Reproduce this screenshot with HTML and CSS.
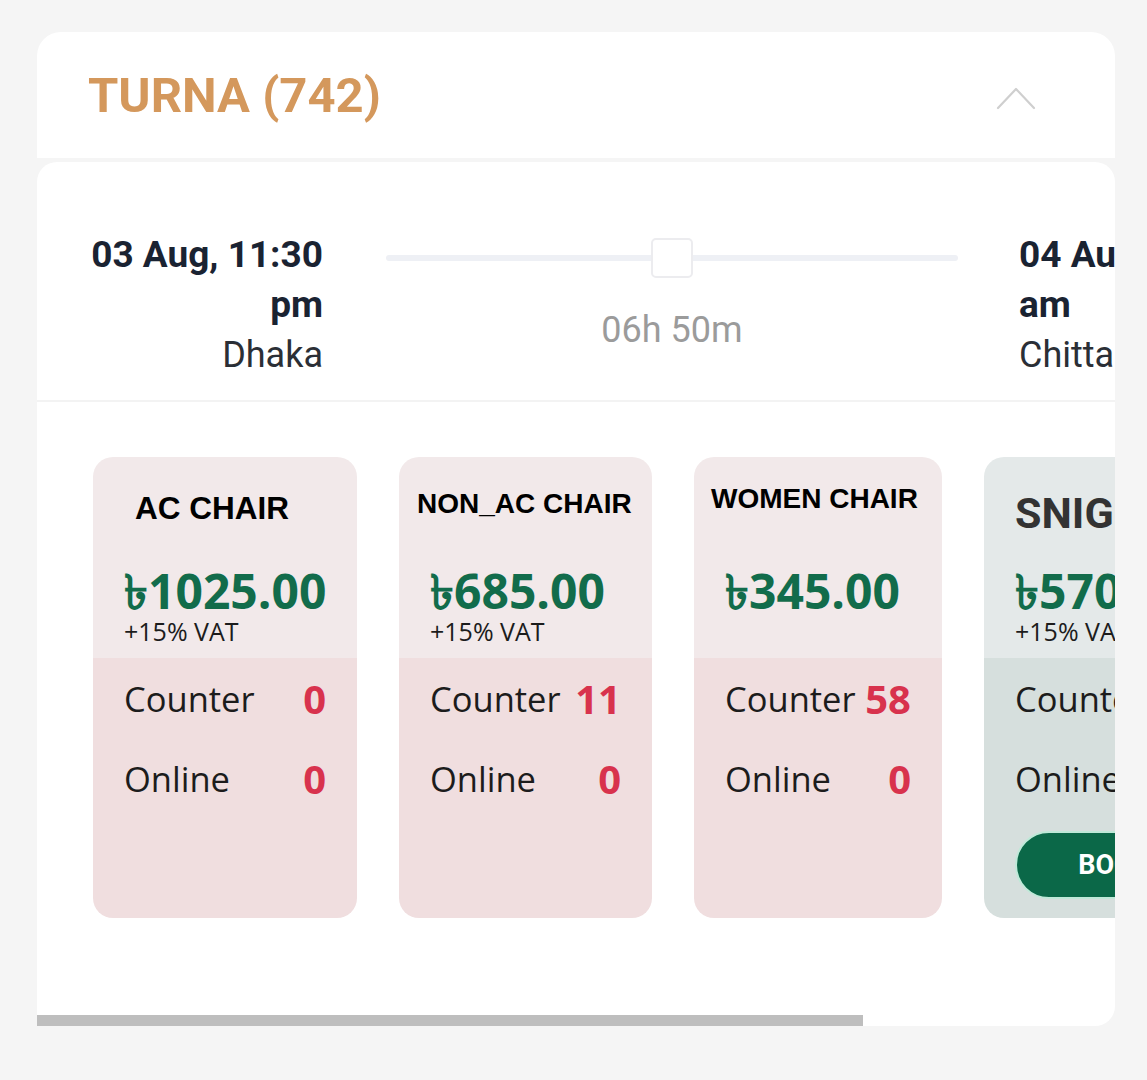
FILE: index.html
```html
<!DOCTYPE html>
<html lang="en">
<head>
<meta charset="utf-8">
<title>TURNA (742)</title>
<link rel="stylesheet" href="styles.css">
</head>
<body>
<div class="page">
  <div class="panel">
    <header class="head">
      <h1 class="title">TURNA (742)</h1>
      <svg class="chev" width="40" height="26" viewBox="0 0 40 26" aria-hidden="true">
        <polyline points="2,23 20,4 38,23" fill="none" stroke="#cfcfcf" stroke-width="2.2" stroke-linecap="round" stroke-linejoin="round"/>
      </svg>
    </header>
    <section class="body">
      <div class="scroll">
        <div class="scroll-inner">
          <div class="trip">
            <div class="stop stop-from">
              <div class="time">03 Aug, 11:30 pm</div>
              <div class="city">Dhaka</div>
            </div>
            <div class="route">
              <div class="track"><span class="thumb"></span></div>
              <div class="dur">06h 50m</div>
            </div>
            <div class="stop stop-to">
              <div class="time">04 Aug, 06:20 am</div>
              <div class="city">Chittagong</div>
            </div>
          </div>
          <div class="seats">
            <div class="seat seat-1">
              <div class="seat-top">
                <div class="name name-1">AC CHAIR</div>
                <div class="price">৳1025.00</div>
                <div class="vat">+15% VAT</div>
              </div>
              <div class="seat-bottom">
                <div class="avail"><span class="avail-label">Counter</span><span class="avail-num">0</span></div>
                <div class="avail"><span class="avail-label">Online</span><span class="avail-num">0</span></div>
              </div>
            </div>
            <div class="seat seat-2">
              <div class="seat-top">
                <div class="name name-2">NON_AC CHAIR</div>
                <div class="price">৳685.00</div>
                <div class="vat">+15% VAT</div>
              </div>
              <div class="seat-bottom">
                <div class="avail"><span class="avail-label">Counter</span><span class="avail-num">11</span></div>
                <div class="avail"><span class="avail-label">Online</span><span class="avail-num">0</span></div>
              </div>
            </div>
            <div class="seat seat-3">
              <div class="seat-top">
                <div class="name name-3">WOMEN CHAIR</div>
                <div class="price">৳345.00</div>
                <div class="vat vat-hidden">&nbsp;</div>
              </div>
              <div class="seat-bottom">
                <div class="avail"><span class="avail-label">Counter</span><span class="avail-num">58</span></div>
                <div class="avail"><span class="avail-label">Online</span><span class="avail-num">0</span></div>
              </div>
            </div>
            <div class="seat seat-4">
              <div class="seat-top">
                <div class="name name-4">SNIGDHA</div>
                <div class="price">৳570.00</div>
                <div class="vat">+15% VAT</div>
              </div>
              <div class="seat-bottom">
                <div class="avail"><span class="avail-label">Counter</span><span class="avail-num">4</span></div>
                <div class="avail"><span class="avail-label">Online</span><span class="avail-num">0</span></div>
                <button class="book">BOOK</button>
              </div>
            </div>
          </div>
        </div>
      </div>
      <div class="scrollbar"><span class="scrollbar-thumb"></span></div>
    </section>
  </div>
</div>
</body>
</html>
```

FILE: styles.css
```css
* { box-sizing: border-box; }

html, body {
  margin: 0;
  padding: 0;
  background: #f5f5f5;
}

.page {
  padding: 32px 0 0 37px;
  width: 1147px;
  height: 1080px;
  overflow: hidden;
}

.panel {
  width: 1078px;
  display: flex;
  flex-direction: column;
  gap: 4px;
}

.head {
  height: 126px;
  background: #ffffff;
  border-radius: 24px 24px 0 0;
  display: flex;
  align-items: center;
  justify-content: space-between;
  padding: 0 79px 0 51px;
}

.title {
  margin: 0;
  font-family: Roboto, "Liberation Sans", sans-serif;
  font-weight: 700;
  font-size: 49px;
  line-height: 1;
  color: #d4985c;
  letter-spacing: 0;
}

.chev {
  display: block;
  margin-top: 6px;
}

.body {
  height: 864px;
  background: #ffffff;
  border-radius: 20px 20px 20px 0;
  display: flex;
  flex-direction: column;
  overflow: hidden;
}

.scroll {
  flex: 1;
  overflow: hidden;
}

.scroll-inner {
  width: max-content;
  min-width: 100%;
}

.trip {
  display: flex;
  align-items: flex-start;
  padding: 68px 0 20px 46px;
  border-bottom: 2px solid #f3f3f3;
  font-family: Roboto, "Liberation Sans", sans-serif;
  font-size: 36px;
  line-height: 50px;
}

.stop {
  width: 240px;
  flex-shrink: 0;
}

.stop-from { text-align: right; }
.stop-to { text-align: left; }

.time {
  font-weight: 700;
  font-size: 37px;
  color: #1a2332;
}

.city {
  font-weight: 400;
  color: #2b2f36;
}

.route {
  width: 572px;
  flex-shrink: 0;
  margin: 0 61px 0 63px;
  display: flex;
  flex-direction: column;
  align-items: center;
}

.track {
  position: relative;
  width: 100%;
  height: 6px;
  margin-top: 25px;
  border-radius: 3px;
  background: #eef0f5;
}

.thumb {
  position: absolute;
  left: 50%;
  top: 50%;
  width: 42px;
  height: 40px;
  margin: -20px 0 0 -21px;
  background: #ffffff;
  border: 2px solid #ececef;
  border-radius: 5px;
}

.dur {
  margin-top: 44px;
  color: #9b9b9b;
  font-weight: 400;
}

.seats {
  display: flex;
  align-items: flex-start;
  gap: 42px;
  padding: 55px 56px 0 56px;
}

.seat {
  flex-shrink: 0;
  height: 461px;
  border-radius: 20px;
  overflow: hidden;
  display: flex;
  flex-direction: column;
  font-family: "Open Sans", "Noto Sans", sans-serif;
}

.seat-1 { width: 264px; }
.seat-2 { width: 253px; }
.seat-3 { width: 248px; }
.seat-4 { width: 260px; }

.seat-top {
  height: 201px;
  padding: 0 31px 0 31px;
  background: #f2e9ea;
}

.seat-bottom {
  flex: 1;
  padding: 0 31px;
  background: #f0dedf;
}

.seat-4 .seat-top { background: #e4e9e9; }
.seat-4 .seat-bottom { background: #d6dfdd; }

.name {
  height: 102px;
  display: flex;
  align-items: center;
  font-family: "Liberation Sans", Arial, sans-serif;
  font-weight: 700;
  color: #000000;
  white-space: nowrap;
}

.name-1 { font-size: 31.5px; padding-left: 11px; }
.name-2 { font-size: 28px; margin-left: -13px; padding-bottom: 8px; }
.name-3 { font-size: 28px; margin-left: -14px; padding-bottom: 18px; }
.name-4 {
  font-family: Roboto, "Liberation Sans", sans-serif;
  font-size: 43px;
  color: #333333;
  padding-top: 10px;
}

.price {
  margin-top: 9px;
  font-size: 48px;
  line-height: 46px;
  height: 46px;
  font-weight: 700;
  color: #126c4b;
  white-space: nowrap;
}

.vat {
  margin-top: 2px;
  font-size: 25px;
  line-height: 30px;
  height: 30px;
  color: #1c1c1c;
  white-space: nowrap;
}

.vat-hidden { visibility: hidden; }

.avail {
  height: 80px;
  display: flex;
  align-items: center;
  justify-content: space-between;
  white-space: nowrap;
}

.avail-label {
  font-size: 34.5px;
  color: #1c1c1c;
}

.avail-num {
  font-size: 40px;
  font-weight: 700;
  color: #d8324d;
}

.book {
  display: block;
  width: 100%;
  height: 68px;
  margin-top: 13px;
  border: 2px solid #bfe9d8;
  border-radius: 34px;
  background: #0b6848;
  color: #ffffff;
  font-family: Roboto, "Liberation Sans", sans-serif;
  font-weight: 700;
  font-size: 27px;
}

.scrollbar {
  height: 11px;
  flex-shrink: 0;
}

.scrollbar-thumb {
  display: block;
  width: 826px;
  height: 11px;
  background: #bebebe;
}
```
